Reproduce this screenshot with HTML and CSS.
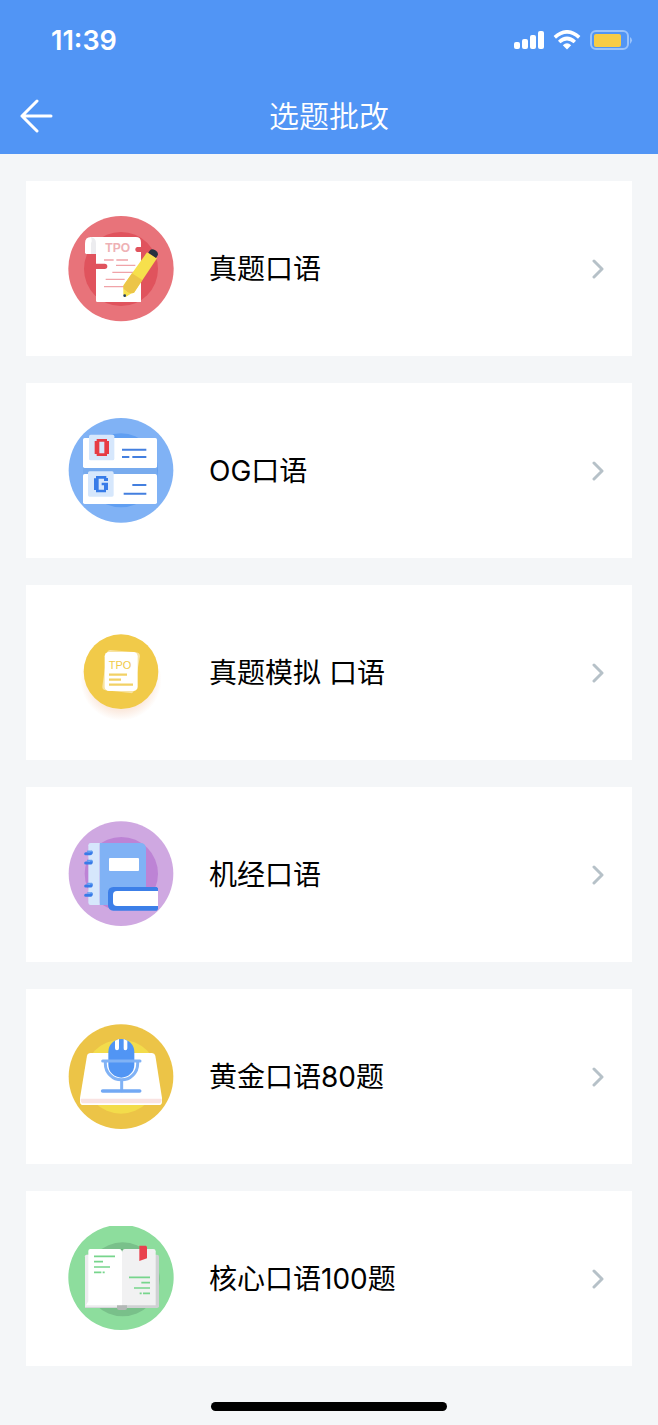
FILE: index.html
```html
<!DOCTYPE html>
<html lang="zh-CN">
<head>
  <meta charset="UTF-8">
  <meta name="viewport" content="width=device-width, initial-scale=1.0">
  <title>选题批改</title>
  <link rel="stylesheet" href="styles.css">
</head>
<body>
  <header class="header">
    <div class="status-bar">
      <span class="time">11:39</span>
      <div class="status-icons">
        <svg width="30" height="20" viewBox="0 0 30 20" fill="#fff" aria-hidden="true">
          <rect x="0" y="12" width="6" height="7" rx="2"/>
          <rect x="8" y="9" width="6" height="10" rx="2"/>
          <rect x="16" y="5" width="6" height="14" rx="2"/>
          <rect x="24" y="1" width="6" height="18" rx="2"/>
        </svg>
        <svg width="28" height="20" viewBox="0 0 28 20" fill="none" stroke="#fff" stroke-width="3.6" aria-hidden="true">
          <path d="M1.8 7.3Q14 -3.6 26.2 7.3"/>
          <path d="M6.2 12Q14 5 21.8 12"/>
          <path d="M9.8 15.2Q14 11.2 18.2 15.2L14 19.4Z" fill="#fff" stroke="none"/>
        </svg>
        <svg width="43" height="20" viewBox="0 0 43 20" aria-hidden="true">
          <rect x="1" y="1" width="37" height="18" rx="5" fill="none" stroke="#9ac3fb" stroke-width="2"/>
          <rect x="4" y="4" width="27" height="13" rx="2" fill="#f7cc45"/>
          <path d="M40 7q4 3 0 7z" fill="#9ac3fb"/>
        </svg>
      </div>
    </div>
    <nav class="nav-bar">
      <a class="back" href="#" aria-label="返回">
        <svg width="34" height="34" viewBox="0 0 34 34" fill="none" stroke="#fff" stroke-width="3" stroke-linecap="round" stroke-linejoin="round" aria-hidden="true">
          <path d="M17 2L2 17L17 32M2 17H31"/>
        </svg>
      </a>
      <h1 class="title">选题批改</h1>
    </nav>
  </header>

  <main class="list">
    <a class="card" href="#">
      <svg class="icon" viewBox="0 0 366 366" aria-hidden="true">
        <circle cx="183" cy="182" r="158" fill="#e8737a"/>
        <circle cx="183" cy="183" r="111" fill="#e0535d"/>
        <path d="M92 87H227Q243 87 243 103V117H231A8 8 0 0 0 231 132H243V282H112Q108 282 108 278V183H134A8 8 0 0 0 134 167H108V138Z" fill="#fff"/>
        <path d="M75 106Q75 87 93 87Q108 89 108 106V138H79Q75 138 75 133Z" fill="#fff"/>
        <path d="M92 87Q108 89 108 106V138H93V106Q98 96 92 87Z" fill="#ececef"/>
        <text class="tpo-bold" x="136" y="132">TPO</text>
        <path d="M132 156H161M169 156H204M168 172H226M157 193H222M137 214H194M132 236H192" stroke="#f0a3a8" stroke-width="4" fill="none"/>
        <path d="M261 133L291 151L222 254Q206 261 191 239V231Z" fill="#f6e04c"/>
        <path d="M216 196L247 216L222 254L207 257L190 243V233Z" fill="#ecc548"/>
        <path d="M190 241Q198 254 215 256L197 267L190 262Z" fill="#f6e04c"/>
        <path d="M269 128Q275 120 286 127Q298 134 292 144L288 150L265 134Z" fill="#26323f"/>
        <circle cx="194" cy="263" r="4" fill="#1d3a66"/>
      </svg>
      <span class="label">真题口语</span>
      <svg class="chevron" viewBox="0 0 14 20" aria-hidden="true"><path d="M3 2L11 10L3 18"/></svg>
    </a>

    <a class="card" href="#">
      <svg class="icon" viewBox="0 0 366 366" aria-hidden="true">
        <circle cx="183" cy="181" r="157" fill="#80b2f5"/>
        <circle cx="183" cy="181" r="111" fill="#609ff2"/>
        <rect x="69" y="171" width="222" height="21" fill="#78abee"/>
        <rect x="69" y="84" width="222" height="90" rx="5" fill="#fff"/>
        <rect x="69" y="192" width="222" height="90" rx="5" fill="#fff"/>
        <rect x="87" y="74" width="76" height="77" rx="5" fill="#d6e7fc"/>
        <rect x="84" y="184" width="77" height="76" rx="5" fill="#d6e7fc"/>
        <path d="M110 87H141V93H147V132H141V138H110V132H104V93H110ZM118 95V130H133V95Z" fill="#e73c45" fill-rule="evenodd"/>
        <path d="M108 198H139V204H144V213H132V206H116V239H132V226H125V218H144V240H138V247H108V240H102V205H108Z" fill="#377be8"/>
        <path d="M186 119H259M186 141H208M217 141H259M217 225H259M191 251H259" stroke="#437fdf" stroke-width="6" fill="none"/>
      </svg>
      <span class="label">OG口语</span>
      <svg class="chevron" viewBox="0 0 14 20" aria-hidden="true"><path d="M3 2L11 10L3 18"/></svg>
    </a>

    <a class="card" href="#">
      <svg class="icon" viewBox="0 0 366 366" aria-hidden="true">
        <defs>
          <radialGradient id="glow">
            <stop offset="0.75" stop-color="#fbeadf"/>
            <stop offset="1" stop-color="#fbeadf" stop-opacity="0"/>
          </radialGradient>
        </defs>
        <circle cx="183" cy="204" r="122" fill="url(#glow)"/>
        <circle cx="183" cy="179" r="112" fill="#f1ca49"/>
        <path d="M151 114L229 121Q240 123 240 133L221 238Q219 245 211 243L136 235Q126 233 127 223L141 123Q143 114 151 114Z" fill="#f8e3a1"/>
        <rect x="134" y="120" width="99" height="117" rx="13" fill="#fff"/>
        <text class="tpo" x="146" y="171">TPO</text>
        <path d="M147 188H201M147 203H183M147 218H219" stroke="#f2d165" stroke-width="7" fill="none"/>
      </svg>
      <span class="label">真题模拟 口语</span>
      <svg class="chevron" viewBox="0 0 14 20" aria-hidden="true"><path d="M3 2L11 10L3 18"/></svg>
    </a>

    <a class="card" href="#">
      <svg class="icon" viewBox="0 0 366 366" aria-hidden="true">
        <circle cx="183" cy="179" r="157" fill="#cfa8e1"/>
        <circle cx="184" cy="179" r="110" fill="#bd83d5"/>
        <path d="M119 87H241Q258 87 258 104V273H119Z" fill="#80b2f5"/>
        <path d="M92 87H119V273H92Q85 273 85 266V94Q85 87 92 87Z" fill="#d6e7fc"/>
        <rect x="147" y="132" width="90" height="39" rx="3" fill="#fff"/>
        <path d="M77 119H90Q94 119 94 115M77 147H90Q94 147 94 143M77 216H90Q94 216 94 212M77 244H90Q94 244 94 240" stroke="#377be8" stroke-width="9" stroke-linecap="round" fill="none"/>
        <path d="M83 112H95M83 140H95M83 209H95M83 237H95" stroke="#629ff3" stroke-width="5" stroke-linecap="round" fill="none"/>
        <path d="M160 219H290L294 223V286L290 290H160Q144 289 144 273V236Q144 220 160 219Z" fill="#3c7fe8"/>
        <path d="M171 231H294V276H171Q159 276 159 264V243Q159 231 171 231Z" fill="#fff"/>
      </svg>
      <span class="label">机经口语</span>
      <svg class="chevron" viewBox="0 0 14 20" aria-hidden="true"><path d="M3 2L11 10L3 18"/></svg>
    </a>

    <a class="card" href="#">
      <svg class="icon" viewBox="0 0 366 366" aria-hidden="true">
        <circle cx="183" cy="182" r="157" fill="#ecc447"/>
        <circle cx="183" cy="182" r="111" fill="#f3dc4b"/>
        <path d="M92 111H276Q284 111 286 119L306 246V257Q306 267 296 267H70Q60 267 60 257V246L81 119Q83 111 92 111Z" fill="#fff"/>
        <path d="M62 248H305Q306 262 295 262H71Q61 262 62 248Z" fill="#f9e3e2"/>
        <path d="M145 108A39 39 0 0 1 223 108V146A39 39 0 0 1 145 146Z" fill="#5195f4"/>
        <path d="M165 74L177 69V97Q177 103 171 103T165 97ZM191 69L202 74V97Q202 103 196 103T191 97Z" fill="#fff"/>
        <path d="M136 136V143A48 48 0 0 0 233 143V136" stroke="#80b2f5" stroke-width="9" fill="none"/>
        <path d="M128 135H240M185 194V224" stroke="#80b2f5" stroke-width="9" stroke-linecap="round" fill="none"/>
        <path d="M128 225H239" stroke="#73a9f4" stroke-width="11" stroke-linecap="round" fill="none"/>
      </svg>
      <span class="label">黄金口语80题</span>
      <svg class="chevron" viewBox="0 0 14 20" aria-hidden="true"><path d="M3 2L11 10L3 18"/></svg>
    </a>

    <a class="card" href="#">
      <svg class="icon" viewBox="0 0 366 366" aria-hidden="true">
        <path d="M149 24H217A158 158 0 1 1 149 24Z" fill="#8ddd9d"/>
        <circle cx="188" cy="184" r="111" fill="#79c08a"/>
        <path d="M80 110H291Q297 110 297 116V265Q297 270 291 270H75V115Q75 110 80 110Z" fill="#cfd1d3"/>
        <path d="M80 110H186V268H75V115Q75 110 80 110Z" fill="#ececee"/>
        <path d="M91 93H178Q186 93 186 102V262H78L85 250V99Q85 93 91 93Z" fill="#fff"/>
        <path d="M195 93H280Q287 93 287 100V262H186V103Q187 94 195 93Z" fill="#f1f1f2"/>
        <path d="M171 262H201V270Q201 276 195 276H177Q171 276 171 270Z" fill="#b3b8b6"/>
        <path d="M182 93H189L186 98Z" fill="#68a879"/>
        <path d="M238 83H258L261 86V121L238 129Z" fill="#e9424e"/>
        <path d="M102 115H165M102 131H129M102 147H150M102 163H124M128 163H134M207 178H270M244 194H270M222 210H270M239 226H245M249 226H270" stroke="#77d58c" stroke-width="5" fill="none"/>
      </svg>
      <span class="label">核心口语100题</span>
      <svg class="chevron" viewBox="0 0 14 20" aria-hidden="true"><path d="M3 2L11 10L3 18"/></svg>
    </a>
  </main>

  <div class="home-indicator"></div>
</body>
</html>
```
FILE: styles.css
```css
* {
  box-sizing: border-box;
}
body {
  margin: 0;
  background: #f4f6f8;
  font-family: Inter, "Noto Sans CJK SC", sans-serif;
  color: #000;
}
.header {
  background: #5195f5;
  color: #fff;
}
.status-bar {
  display: flex;
  justify-content: space-between;
  align-items: center;
  height: 80px;
  padding: 0 25px 0 51px;
}
.time {
  font-size: 27px;
  font-weight: 600;
}
.status-icons {
  display: flex;
  align-items: center;
  gap: 9px;
}
.nav-bar {
  display: grid;
  grid-template-columns: 34px 1fr 34px;
  align-items: center;
  height: 74px;
  padding: 0 20px 2px;
}
.back {
  display: flex;
}
.title {
  margin: 0;
  font-size: 30px;
  font-weight: 350;
  line-height: 40px;
  text-align: center;
}
.list {
  display: flex;
  flex-direction: column;
  gap: 27px;
  padding: 27px 26px 36px;
}
.card {
  display: flex;
  align-items: center;
  padding: 27px 27px 26px 34px;
  background: #fff;
  color: inherit;
  text-decoration: none;
}
.icon {
  width: 122px;
  height: 122px;
  flex-shrink: 0;
}
.label {
  flex: 1;
  margin-left: 27px;
  font-size: 28px;
  line-height: 40px;
}
.chevron {
  width: 14px;
  height: 20px;
  fill: none;
  stroke: #b6c1c8;
  stroke-width: 3;
  stroke-linecap: round;
  stroke-linejoin: round;
}
.tpo-bold {
  font: bold 36px "Liberation Sans", sans-serif;
  fill: #eeb1b5;
}
.tpo {
  font: 33px "Liberation Sans", sans-serif;
  fill: #f1ca49;
}
.home-indicator {
  width: 236px;
  height: 9px;
  margin: 0 auto 14px;
  border-radius: 5px;
  background: #000;
}
```
